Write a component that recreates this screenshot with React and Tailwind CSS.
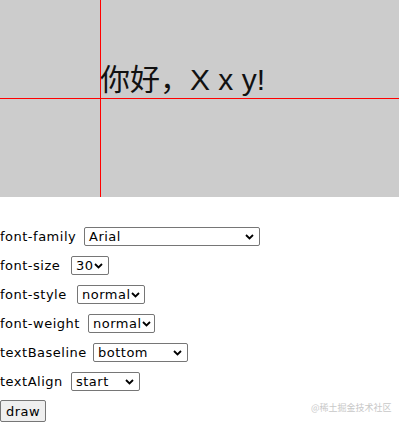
import React from "react";

function Chevron() {
  return (
    <svg width="9" height="6" viewBox="0 0 9 6" className="shrink-0">
      <path d="M1 1 L4.5 4.5 L8 1" fill="none" stroke="#000" strokeWidth="1.8" />
    </svg>
  );
}

function FakeSelect({ value, widthClass }) {
  return (
    <div
      className={`flex h-[19px] items-center justify-between rounded-[2px] border border-[#767676] bg-white pl-[4px] pr-[5px] text-[13px] leading-none tracking-[0.5px] text-black ${widthClass}`}
    >
      <span>{value}</span>
      <Chevron />
    </div>
  );
}

function Row({ label, labelWidth, value, selectWidth }) {
  return (
    <div className="flex h-[19px] items-center">
      <span className={`${labelWidth} shrink-0 text-[13px] leading-none tracking-[0.5px] text-black`}>{label}</span>
      <FakeSelect value={value} widthClass={selectWidth} />
    </div>
  );
}

export default function App() {
  return (
    <div
      className="relative h-[425px] w-[399px] overflow-hidden bg-white"
      style={{ fontFamily: '"DejaVu Sans", "Noto Sans CJK SC", sans-serif' }}
    >
      <div className="relative h-[197px] w-[399px] bg-[#cccccc]">
        <div className="absolute left-[100px] top-0 h-full w-px bg-[#ff0000]" />
        <div className="absolute left-0 top-[98px] h-px w-full bg-[#ff0000]" />
        <div
          className="absolute left-[100px] top-[65px] whitespace-pre text-[30px] leading-[30px] text-[#111111]"
          style={{ fontFamily: '"Liberation Sans", "Noto Sans CJK SC", sans-serif' }}
        >
          你好，X x y!
        </div>
      </div>
      <div className="flex flex-col gap-[10px] pt-[30px]">
        <Row label="font-family" labelWidth="w-[84px]" value="Arial" selectWidth="w-[176px]" />
        <Row label="font-size" labelWidth="w-[71px]" value="30" selectWidth="w-[38px]" />
        <Row label="font-style" labelWidth="w-[77px]" value="normal" selectWidth="w-[68px]" />
        <Row label="font-weight" labelWidth="w-[88px]" value="normal" selectWidth="w-[67px]" />
        <Row label="textBaseline" labelWidth="w-[93px]" value="bottom" selectWidth="w-[95px]" />
        <Row label="textAlign" labelWidth="w-[71px]" value="start" selectWidth="w-[69px]" />
        <div className="-mt-[1px] flex">
          <button className="h-[22px] w-[46px] rounded-[2px] border border-[#767676] bg-[#efefef] text-[13px] leading-none tracking-[0.5px] text-black">
            draw
          </button>
        </div>
      </div>
      <div
        className="absolute left-[311px] top-[403px] text-[9px] leading-none text-[#c8c8c8]"
        style={{ fontFamily: '"Noto Sans CJK SC", sans-serif' }}
      >
        @稀土掘金技术社区
      </div>
    </div>
  );
}
